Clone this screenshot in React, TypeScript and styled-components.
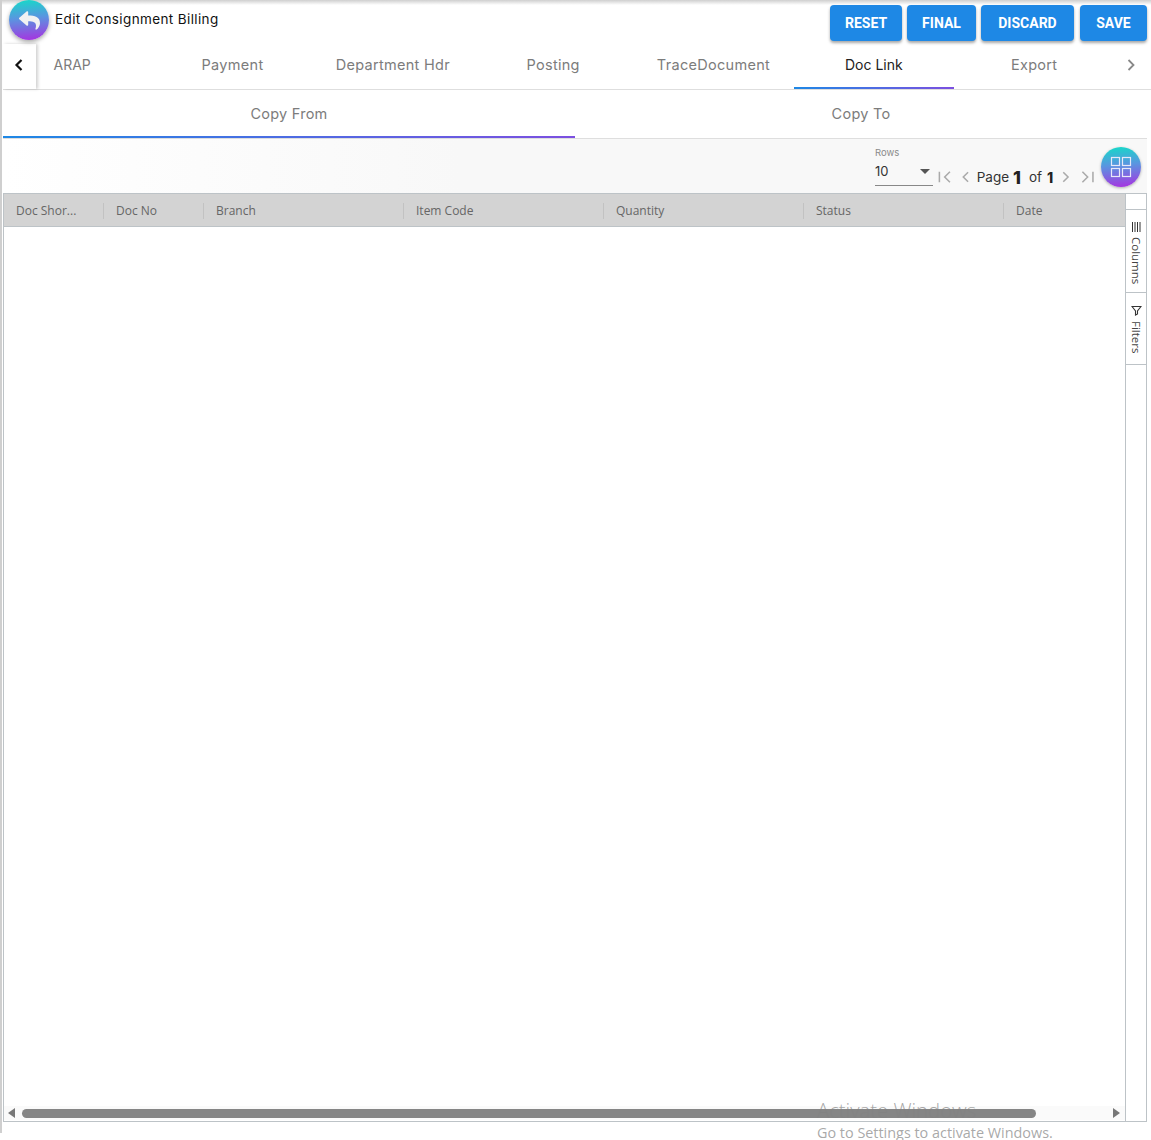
import React from "react";
import styled, { createGlobalStyle } from "styled-components";
import { FaReply } from "react-icons/fa";

const Global = createGlobalStyle`
  html, body { margin: 0; padding: 0; background: #fff; }
  body { font-family: "Inter", "Open Sans", sans-serif; overflow: hidden; }
  * { box-sizing: border-box; }
`;

const Page = styled.div`
  position: relative;
  width: 1151px;
  height: 1140px;
  overflow: hidden;
  display: flex;
  flex-direction: column;
`;
const TopShade = styled.div`
  position: absolute;
  inset: 0 0 auto 0;
  height: 5px;
  background: linear-gradient(#cfcfcf, #fff);
  pointer-events: none;
`;
const LeftEdge = styled.div`
  position: absolute;
  left: 0;
  top: 0;
  width: 2px;
  height: 1133px;
  background: #cfcfcf;
`;
const Header = styled.header`
  height: 44px;
  flex: none;
  display: flex;
  justify-content: space-between;
  padding: 5px 4px 0 9px;
`;
const TitleGroup = styled.div`
  display: flex;
  align-items: flex-start;
  gap: 6px;
  margin-top: -5px;
  position: relative;
  z-index: 2;
`;
const gradient = "linear-gradient(175deg, #14dcc8 0%, #5a95e0 45%, #a92fe0 100%)";
const Circle = styled.div`
  width: 40px;
  height: 40px;
  border-radius: 50%;
  background: ${gradient};
  box-shadow: 0 2px 4px rgba(0, 0, 0, 0.35);
  color: #f2f2f2;
  display: flex;
  align-items: center;
  justify-content: center;
  flex: none;
`;
const Title = styled.div`
  font-family: "Inter", sans-serif;
  font-size: 13.5px;
  line-height: 20px;
  margin-top: 9px;
  color: #111;
  letter-spacing: 0.38px;
`;
const Actions = styled.div`
  display: flex;
  gap: 5px;
`;
const ActionButton = styled.button<{ $w: number }>`
  width: ${(p) => p.$w}px;
  height: 36px;
  border: 0;
  border-radius: 4px;
  background: #1e88e5;
  color: #fff;
  font-family: "Roboto", sans-serif;
  font-weight: 700;
  font-size: 14px;
  padding: 0;
  box-shadow: 0 2px 3px rgba(0, 0, 0, 0.35);
  &:last-child {
    margin-left: 1px;
  }
`;
const TabBar = styled.div`
  height: 46px;
  flex: none;
  margin-left: 3px;
  display: flex;
  border-bottom: 1px solid #dedede;
  align-items: stretch;
`;
const ScrollButton = styled.div<{ $left?: boolean }>`
  width: ${(p) => (p.$left ? 33 : 32)}px;
  flex: none;
  display: flex;
  align-items: center;
  justify-content: center;
  padding: ${(p) => (p.$left ? "0 1px 4px 0" : "0 8px 4px 0")};
  color: ${(p) => (p.$left ? "#111" : "#888")};
  ${(p) => p.$left && "box-shadow: 2px 0 3px rgba(0,0,0,0.18); position: relative; z-index: 1;"}
`;
const TabScroller = styled.div`
  flex: 1;
  overflow: hidden;
  display: flex;
`;
const TabTrack = styled.div`
  display: flex;
  flex: none;
  margin-left: -44px;
`;
const Tab = styled.div<{ $active?: boolean; $short?: boolean }>`
  width: 160.33px;
  flex: none;
  height: 45px;
  display: flex;
  align-items: center;
  justify-content: center;
  padding-bottom: 4px;
  font-size: ${(p) => (p.$short ? 14 : 14.5)}px;
  letter-spacing: ${(p) => (p.$short ? 0 : 0.3)}px;
  color: ${(p) => (p.$active ? "#222" : "#7c7c7c")};
  position: relative;
  ${(p) =>
    p.$active &&
    `&::after { content: ""; position: absolute; left: 0; right: 0; bottom: 0; height: 2px;
      background: linear-gradient(90deg, #1e88e5, #7c4fe0); }`}
`;
const SubTabs = styled.div`
  height: 49px;
  flex: none;
  margin: 0 4px 0 3px;
  display: flex;
  border-bottom: 1px solid #dedede;
`;
const SubTab = styled.div<{ $active?: boolean }>`
  flex: 1;
  display: flex;
  align-items: center;
  justify-content: center;
  padding-bottom: 1px;
  font-size: 14.5px;
  letter-spacing: 0.25px;
  color: #7c7c7c;
  position: relative;
  ${(p) =>
    p.$active &&
    `&::after { content: ""; position: absolute; left: 0; right: 0; bottom: 0; height: 2px;
      background: linear-gradient(90deg, #1e88e5, #7c4fe0); }`}
`;
const Toolbar = styled.div`
  height: 54px;
  flex: none;
  margin: 0 4px 0 3px;
  background: linear-gradient(90deg, #fff, #f8f8f8 40%);
  display: flex;
  justify-content: flex-end;
  align-items: flex-start;
  padding-right: 6px;
`;
const RowsField = styled.div`
  width: 58px;
  margin-top: 9px;
  display: flex;
  flex-direction: column;
`;
const RowsLabel = styled.div`
  font-size: 9.5px;
  line-height: 10px;
  color: #8a8a8a;
`;
const RowsValue = styled.div`
  height: 28px;
  border-bottom: 1px solid #888;
  font-size: 13px;
  color: #333;
  display: flex;
  justify-content: space-between;
  align-items: center;
  padding: 0 3px 1px 0;
`;
const Caret = styled.span`
  width: 0;
  height: 0;
  border-left: 5px solid transparent;
  border-right: 5px solid transparent;
  border-top: 5px solid #555;
`;
const Pager = styled.div`
  display: flex;
  align-items: center;
  height: 20px;
  margin: 28px 6px 0 4px;
  width: 158px;
  color: #aaa;
`;
const PageText = styled.span`
  font-size: 13.5px;
  color: #333;
  white-space: nowrap;
  margin: 0 3px 0 3px;
`;
const PageNumber = styled.b<{ $big?: boolean }>`
  font-size: ${(p) => (p.$big ? 18 : 14)}px;
  font-weight: 800;
  color: #222;
  margin: 0 5px 0 ${(p) => (p.$big ? 1 : 2)}px;
`;
const GridButton = styled(Circle)`
  margin-top: 8px;
  box-shadow: 0 1px 3px rgba(0, 0, 0, 0.3);
`;
const GridFrame = styled.div`
  flex: 1;
  margin: 0 4px 18px 3px;
  border: 1px solid #bdc3c7;
  display: flex;
  min-height: 0;
`;
const Grid = styled.div`
  flex: 1;
  min-width: 0;
  display: flex;
  flex-direction: column;
  overflow: hidden;
`;
const GridHead = styled.div`
  height: 33px;
  flex: none;
  background: #d3d3d3;
  border-bottom: 1px solid #bdc3c7;
  display: flex;
`;
const HeadCell = styled.div<{ $w: number }>`
  width: ${(p) => p.$w}px;
  flex: none;
  padding-left: 12px;
  display: flex;
  align-items: center;
  font-family: "Open Sans", sans-serif;
  font-size: 12px;
  font-weight: 500;
  color: #666;
  position: relative;
  &:not(:last-child)::after {
    content: "";
    position: absolute;
    right: 0;
    top: 9px;
    height: 16px;
    width: 1px;
    background: #c2c2c2;
  }
`;
const GridBody = styled.div`
  flex: 1;
`;
const ScrollBar = styled.div`
  height: 14px;
  flex: none;
  background: #fafafa;
  display: flex;
  align-items: center;
  padding: 0 5px 0 4px;
  margin-bottom: 1px;
`;
const Arrow = styled.span<{ $right?: boolean }>`
  width: 0;
  height: 0;
  flex: none;
  border-top: 5px solid transparent;
  border-bottom: 5px solid transparent;
  ${(p) => (p.$right ? "border-left: 7px solid #777;" : "border-right: 7px solid #777;")}
`;
const Thumb = styled.div`
  width: 1014px;
  flex: none;
  height: 9px;
  margin: 0 77px 0 7px;
  border-radius: 5px;
  background: #858585;
`;
const SideBar = styled.aside`
  width: 21px;
  flex: none;
  border-left: 1px solid #bdc3c7;
  display: flex;
  flex-direction: column;
`;
const SideSpacer = styled.div`
  height: 16px;
  border-bottom: 1px solid #bdc3c7;
`;
const SideButton = styled.div<{ $h: number }>`
  height: ${(p) => p.$h}px;
  border-bottom: 1px solid #bdc3c7;
  display: flex;
  flex-direction: column;
  align-items: center;
  padding-top: 12px;
  gap: 5px;
  color: #333;
`;
const SideLabel = styled.span`
  writing-mode: vertical-lr;
  font-family: "Open Sans", sans-serif;
  font-size: 11.5px;
  color: #444;
`;
const Watermark = styled.div`
  position: absolute;
  left: 817px;
  top: 1098px;
  font-family: "Open Sans", sans-serif;
  color: rgba(130, 130, 130, 0.7);
  pointer-events: none;
  white-space: nowrap;
`;
const WatermarkTitle = styled.div`
  font-size: 20.3px;
  line-height: 24px;
  font-weight: 300;
`;
const WatermarkText = styled.div`
  font-size: 14.4px;
  line-height: 21px;
`;
const PagerGap = styled.span`
  width: 6px;
  flex: none;
`;

const Chevron = ({ dir, size = 16, w = 2 }: { dir: "l" | "r"; size?: number; w?: number }) => (
  <svg width={size} height={size} viewBox="0 0 16 16" fill="none" stroke="currentColor" strokeWidth={w}>
    <path d={dir === "l" ? "M10.5 3 5.5 8l5 5" : "M5.5 3l5 5-5 5"} />
  </svg>
);
const EndArrow = ({ dir }: { dir: "l" | "r" }) => (
  <svg width="16" height="16" viewBox="0 0 16 16" fill="none" stroke="currentColor" strokeWidth="1.6">
    <path d={dir === "l" ? "M2.5 2.5v11M13.5 2.5 8 8l5.5 5.5" : "M13.5 2.5v11M2.5 2.5 8 8l-5.5 5.5"} />
  </svg>
);

const tabs = ["ARAP", "Payment", "Department Hdr", "Posting", "TraceDocument", "Doc Link", "Export"];
const columns: [string, number][] = [
  ["Doc Shor...", 100],
  ["Doc No", 100],
  ["Branch", 200],
  ["Item Code", 200],
  ["Quantity", 200],
  ["Status", 200],
  ["Date", 200],
];

export default function App() {
  return (
    <Page>
      <Global />
      <TopShade />
      <LeftEdge />
      <Header>
        <TitleGroup>
          <Circle>
            <FaReply size={21} />
          </Circle>
          <Title>Edit Consignment Billing</Title>
        </TitleGroup>
        <Actions>
          <ActionButton $w={72}>RESET</ActionButton>
          <ActionButton $w={69}>FINAL</ActionButton>
          <ActionButton $w={93}>DISCARD</ActionButton>
          <ActionButton $w={67}>SAVE</ActionButton>
        </Actions>
      </Header>
      <TabBar>
        <ScrollButton $left>
          <Chevron dir="l" size={16} w={2.2} />
        </ScrollButton>
        <TabScroller>
          <TabTrack>
            {tabs.map((t) => (
              <Tab key={t} $active={t === "Doc Link"} $short={t === "Doc Link" || t === "ARAP"}>
                {t}
              </Tab>
            ))}
          </TabTrack>
        </TabScroller>
        <ScrollButton>
          <Chevron dir="r" size={16} w={1.8} />
        </ScrollButton>
      </TabBar>
      <SubTabs>
        <SubTab $active>Copy From</SubTab>
        <SubTab>Copy To</SubTab>
      </SubTabs>
      <Toolbar>
        <RowsField>
          <RowsLabel>Rows</RowsLabel>
          <RowsValue>
            10
            <Caret />
          </RowsValue>
        </RowsField>
        <Pager>
          <EndArrow dir="l" />
          <PagerGap />
          <Chevron dir="l" w={1.6} />
          <PageText>Page</PageText>
          <PageNumber $big>1</PageNumber>
          <PageText>of</PageText>
          <PageNumber>1</PageNumber>
          <Chevron dir="r" w={1.6} />
          <PagerGap />
          <EndArrow dir="r" />
        </Pager>
        <GridButton>
          <svg width="22" height="22" viewBox="0 0 22 22" fill="none" stroke="#e8e8f8" strokeWidth="1.2">
            <rect x="1.5" y="1.5" width="8" height="8" />
            <rect x="12.5" y="1.5" width="8" height="8" />
            <rect x="1.5" y="12.5" width="8" height="8" />
            <rect x="12.5" y="12.5" width="8" height="8" />
          </svg>
        </GridButton>
      </Toolbar>
      <GridFrame>
        <Grid>
          <GridHead>
            {columns.map(([c, w]) => (
              <HeadCell key={c} $w={w}>
                {c}
              </HeadCell>
            ))}
          </GridHead>
          <GridBody />
          <ScrollBar>
            <Arrow />
            <Thumb />
            <Arrow $right />
          </ScrollBar>
        </Grid>
        <SideBar>
          <SideSpacer />
          <SideButton $h={83}>
            <svg width="11" height="10" viewBox="0 0 11 10" stroke="#333" strokeWidth="1">
              <path d="M1.5 0v10M4 0v10M6.5 0v10M9 0v10" />
            </svg>
            <SideLabel>Columns</SideLabel>
          </SideButton>
          <SideButton $h={72}>
            <svg width="11" height="11" viewBox="0 0 11 11" fill="none" stroke="#333" strokeWidth="1.1">
              <path d="M1 1.5h9L6.5 6v3L4.5 10V6z" />
            </svg>
            <SideLabel>Filters</SideLabel>
          </SideButton>
        </SideBar>
      </GridFrame>
      <Watermark>
        <WatermarkTitle>Activate Windows</WatermarkTitle>
        <WatermarkText>Go to Settings to activate Windows.</WatermarkText>
      </Watermark>
    </Page>
  );
}
